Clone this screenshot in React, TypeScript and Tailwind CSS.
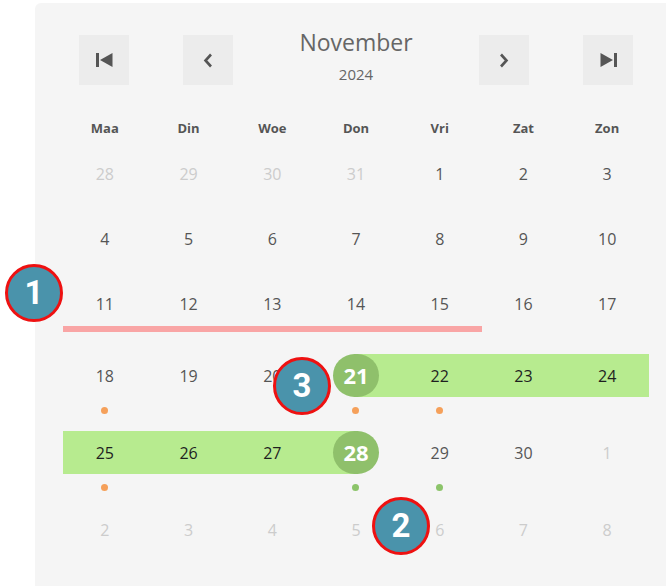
import React from 'react';

type Band = 'none' | 'full' | 'start' | 'end';

interface Day {
  n: number;
  muted?: boolean;
  band?: Band;
  circle?: boolean;
  dot?: 'orange' | 'green';
}

interface Week {
  days: Day[];
  underline?: number; // number of leading cells underlined
}

const d = (n: number, extra: Partial<Day> = {}): Day => ({ n, ...extra });

const weeks: Week[] = [
  { days: [d(28, { muted: true }), d(29, { muted: true }), d(30, { muted: true }), d(31, { muted: true }), d(1), d(2), d(3)] },
  { days: [d(4), d(5), d(6), d(7), d(8), d(9), d(10)] },
  { days: [d(11), d(12), d(13), d(14), d(15), d(16), d(17)], underline: 5 },
  {
    days: [
      d(18, { dot: 'orange' }),
      d(19),
      d(20),
      d(21, { band: 'start', circle: true, dot: 'orange' }),
      d(22, { band: 'full', dot: 'orange' }),
      d(23, { band: 'full' }),
      d(24, { band: 'full' }),
    ],
  },
  {
    days: [
      d(25, { band: 'full', dot: 'orange' }),
      d(26, { band: 'full' }),
      d(27, { band: 'full' }),
      d(28, { band: 'end', circle: true, dot: 'green' }),
      d(29, { dot: 'green' }),
      d(30),
      d(1, { muted: true }),
    ],
  },
  { days: [d(2, { muted: true }), d(3, { muted: true }), d(4, { muted: true }), d(5, { muted: true }), d(6, { muted: true }), d(7, { muted: true }), d(8, { muted: true })] },
];

const weekdays = ['Maa', 'Din', 'Woe', 'Don', 'Vri', 'Zat', 'Zon'];

const bandClass: Record<Band, string> = {
  none: '',
  full: 'bg-[#b7eb8f]',
  start: 'bg-[linear-gradient(to_right,transparent_50%,#b7eb8f_50%)]',
  end: 'bg-[linear-gradient(to_right,#b7eb8f_50%,transparent_50%)]',
};

function NavButton({ children }: { children: React.ReactNode }) {
  return (
    <button className="w-[50px] h-[50px] bg-[#ececec] flex items-center justify-center text-[#555]">
      {children}
    </button>
  );
}

function DayCell({ day }: { day: Day }) {
  const band = day.band ?? 'none';
  return (
    <div className={`h-[43px] flex items-center justify-center ${bandClass[band]}`}>
      {day.circle ? (
        <div className="w-[46px] h-[43px] rounded-full bg-[#8fc06b] flex items-center justify-center text-white text-[22px] font-bold">
          {day.n}
        </div>
      ) : (
        <span
          className={`text-[16px] ${
            day.muted ? 'text-[#cccccc]' : band !== 'none' ? 'text-[#1f1f1f] font-medium' : 'text-[#555]'
          }`}
        >
          {day.n}
        </span>
      )}
    </div>
  );
}

function Badge({ label, className }: { label: string; className: string }) {
  return (
    <div
      className={`absolute w-[58px] h-[58px] rounded-full border-[3px] border-[#ee1111] bg-[#4a93ab] flex items-center justify-center text-white text-[33px] font-bold font-['Roboto',sans-serif] ${className}`}
    >
      {label}
    </div>
  );
}

export default function App() {
  return (
    <div className="relative w-[666px] h-[586px] overflow-hidden bg-white flex pl-[35px] pt-[3px] font-['Open_Sans',sans-serif]">
      <div className="flex-1 bg-[#f5f5f5] rounded-tl-[6px] pt-[24px] pl-[28px]">
        {/* Month navigation */}
        <div className="w-[586px] flex items-start justify-between px-[16px]">
          <div className="flex gap-[54px] mt-[8px]">
            <NavButton>
              <svg width="17" height="14" viewBox="0 0 17 14" fill="currentColor">
                <rect x="0" y="0" width="3" height="14" />
                <path d="M16.5 0 L4 7 L16.5 14 Z" />
              </svg>
            </NavButton>
            <NavButton>
              <svg width="10" height="15" viewBox="0 0 10 15" fill="none" stroke="currentColor" strokeWidth="2.6">
                <polyline points="8,1.5 2.5,7.5 8,13.5" />
              </svg>
            </NavButton>
          </div>
          <div className="flex flex-col items-center text-[#666]">
            <div className="text-[23px] leading-[30px]">November</div>
            <div className="text-[15px] leading-[20px] mt-[7px]">2024</div>
          </div>
          <div className="flex gap-[54px] mt-[8px]">
            <NavButton>
              <svg width="10" height="15" viewBox="0 0 10 15" fill="none" stroke="currentColor" strokeWidth="2.6">
                <polyline points="2,1.5 7.5,7.5 2,13.5" />
              </svg>
            </NavButton>
            <NavButton>
              <svg width="17" height="14" viewBox="0 0 17 14" fill="currentColor">
                <path d="M0.5 0 L13 7 L0.5 14 Z" />
                <rect x="14" y="0" width="3" height="14" />
              </svg>
            </NavButton>
          </div>
        </div>

        {/* Weekday header */}
        <div className="w-[586px] grid grid-cols-7 mt-[33px] h-[20px] leading-[20px] text-center text-[13px] font-bold text-[#555]">
          {weekdays.map((w) => (
            <div key={w}>{w}</div>
          ))}
        </div>

        {/* Weeks */}
        <div className="w-[586px] mt-[14px] flex flex-col">
          {weeks.map((week, wi) => {
            const hasDots = week.days.some((x) => x.dot);
            return (
              <div key={wi} className={hasDots ? 'pb-[17px]' : 'pb-[22px]'}>
                <div className="grid grid-cols-7">
                  {week.days.map((day, di) => (
                    <DayCell key={di} day={day} />
                  ))}
                </div>
                {week.underline && (
                  <div className="grid grid-cols-7 mt-[1px]">
                    <div className="col-span-5 h-[6px] bg-[#f9a5a5]" />
                  </div>
                )}
                {hasDots && (
                  <div className="grid grid-cols-7 mt-[10px] h-[7px]">
                    {week.days.map((day, di) => (
                      <div key={di} className="flex justify-center">
                        {day.dot && (
                          <span
                            className={`w-[7px] h-[7px] rounded-full ${
                              day.dot === 'orange' ? 'bg-[#f5a05a]' : 'bg-[#8cc46a]'
                            }`}
                          />
                        )}
                      </div>
                    ))}
                  </div>
                )}
              </div>
            );
          })}
        </div>
      </div>

      <Badge label="1" className="left-[5px] top-[264px]" />
      <Badge label="3" className="left-[273px] top-[357px]" />
      <Badge label="2" className="left-[372px] top-[497px]" />
    </div>
  );
}
